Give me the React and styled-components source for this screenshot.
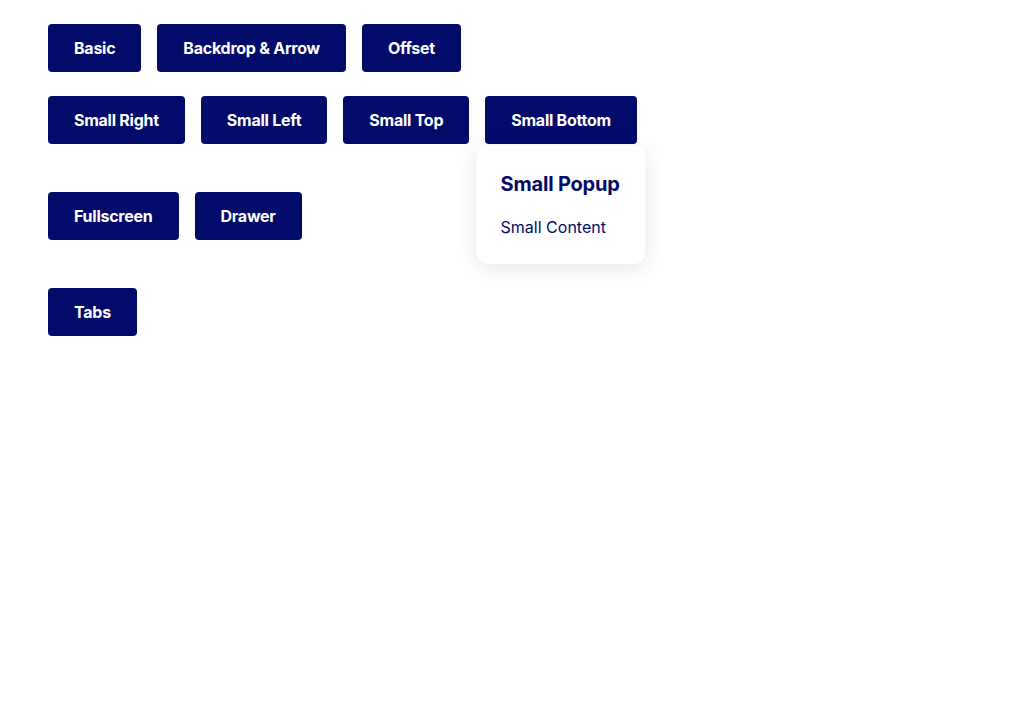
import styled, { createGlobalStyle } from "styled-components";

const GlobalStyle = createGlobalStyle`
  html, body {
    margin: 0;
    padding: 0;
    background: #ffffff;
    font-family: "Inter", "Noto Sans", sans-serif;
  }
`;

const Page = styled.div`
  display: flex;
  flex-direction: column;
  padding: 24px 48px;
`;

const Row = styled.div`
  display: flex;
  gap: 16px;
  margin-bottom: ${(p) => p.spacing || 0}px;
`;

const Anchor = styled.div`
  position: relative;
`;

const Button = styled.button`
  height: 48px;
  padding: 0 26px;
  border: none;
  border-radius: 4px;
  background: #020b6a;
  color: #ffffff;
  font-family: "Inter", "Noto Sans", sans-serif;
  font-size: 16px;
  font-weight: 700;
  letter-spacing: -0.25px;
  cursor: pointer;
`;

const Popup = styled.div`
  position: absolute;
  top: calc(100% + 1px);
  left: 50%;
  transform: translateX(-50%);
  width: 169px;
  box-sizing: border-box;
  padding: 24px 24px 25px;
  border-radius: 12px;
  background: #ffffff;
  box-shadow: 0 4px 24px rgba(20, 24, 80, 0.1);
  color: #020b6a;
`;

const PopupTitle = styled.div`
  font-size: 20px;
  font-weight: 700;
  line-height: 30px;
  letter-spacing: -0.2px;
  margin-bottom: 16px;
  white-space: nowrap;
`;

const PopupText = styled.div`
  font-size: 16px;
  font-weight: 400;
  line-height: 24px;
  white-space: nowrap;
`;

export default function App() {
  return (
    <>
      <GlobalStyle />
      <Page>
        <Row spacing={24}>
          <Button>Basic</Button>
          <Button>Backdrop &amp; Arrow</Button>
          <Button>Offset</Button>
        </Row>
        <Row spacing={48}>
          <Button>Small Right</Button>
          <Button>Small Left</Button>
          <Button>Small Top</Button>
          <Anchor>
            <Button>Small Bottom</Button>
            <Popup>
              <PopupTitle>Small Popup</PopupTitle>
              <PopupText>Small Content</PopupText>
            </Popup>
          </Anchor>
        </Row>
        <Row spacing={48}>
          <Button>Fullscreen</Button>
          <Button>Drawer</Button>
        </Row>
        <Row>
          <Button>Tabs</Button>
        </Row>
      </Page>
    </>
  );
}
